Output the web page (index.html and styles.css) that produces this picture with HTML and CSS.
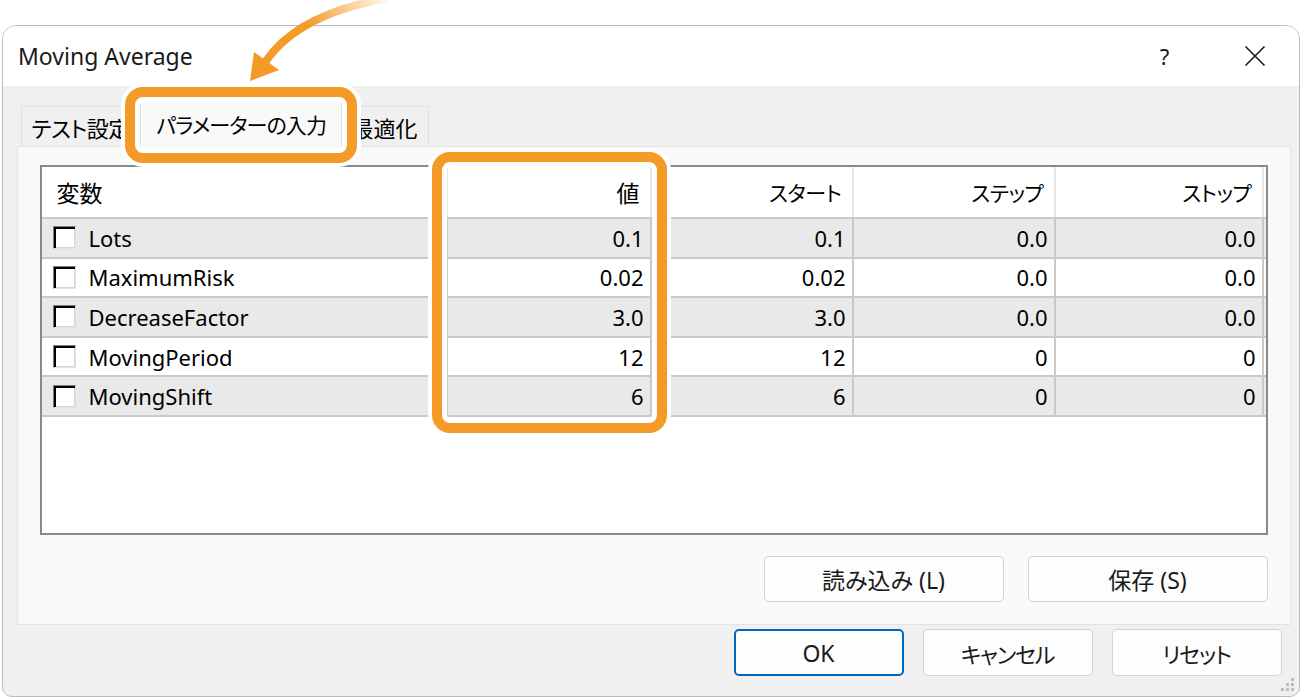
FILE: index.html
```html
<!DOCTYPE html>
<html lang="ja">
<head>
<meta charset="utf-8">
<title>Moving Average</title>
<link rel="stylesheet" href="styles.css">
</head>
<body>
<div class="window">
  <div class="titlebar">
    <div class="title">Moving Average</div>
    <div class="ctl help">?</div>
    <div class="ctl close">
      <svg width="22" height="22" viewBox="0 0 22 22"><path d="M1.5 1.5 L20.5 20.5 M20.5 1.5 L1.5 20.5" stroke="#1a1a1a" stroke-width="1.6" fill="none"/></svg>
    </div>
  </div>
  <div class="content">
    <div class="tabs">
      <div class="tab first">テスト設定</div>
      <div class="tab active">パラメーターの入力</div>
      <div class="tab last">最適化</div>
    </div>
    <div class="panel">
      <div class="table">
        <div class="row head">
          <div class="cell name kanji">変数</div>
          <div class="cell num kanji">値</div>
          <div class="cell num">スタート</div>
          <div class="cell num">ステップ</div>
          <div class="cell num">ストップ</div>
        </div>
        <div class="row odd">
          <div class="cell name"><span class="cb"></span>Lots</div>
          <div class="cell num">0.1</div>
          <div class="cell num">0.1</div>
          <div class="cell num">0.0</div>
          <div class="cell num">0.0</div>
        </div>
        <div class="row">
          <div class="cell name"><span class="cb"></span>MaximumRisk</div>
          <div class="cell num">0.02</div>
          <div class="cell num">0.02</div>
          <div class="cell num">0.0</div>
          <div class="cell num">0.0</div>
        </div>
        <div class="row odd">
          <div class="cell name"><span class="cb"></span>DecreaseFactor</div>
          <div class="cell num">3.0</div>
          <div class="cell num">3.0</div>
          <div class="cell num">0.0</div>
          <div class="cell num">0.0</div>
        </div>
        <div class="row">
          <div class="cell name"><span class="cb"></span>MovingPeriod</div>
          <div class="cell num">12</div>
          <div class="cell num">12</div>
          <div class="cell num">0</div>
          <div class="cell num">0</div>
        </div>
        <div class="row odd last-row">
          <div class="cell name"><span class="cb"></span>MovingShift</div>
          <div class="cell num">6</div>
          <div class="cell num">6</div>
          <div class="cell num">0</div>
          <div class="cell num">0</div>
        </div>
      </div>
      <div class="panel-actions">
        <button class="btn wide">読み込み (L)</button>
        <button class="btn wide">保存 (S)</button>
      </div>
    </div>
    <div class="dialog-actions">
      <button class="btn ok">OK</button>
      <button class="btn kana">キャンセル</button>
      <button class="btn kana">リセット</button>
    </div>
  </div>
  <svg class="grip" width="16" height="16" viewBox="0 0 16 16">
    <rect x="11" y="0" width="3" height="3" fill="#bdbdbd"/>
    <rect x="6" y="5" width="3" height="3" fill="#bdbdbd"/>
    <rect x="11" y="5" width="3" height="3" fill="#bdbdbd"/>
    <rect x="1" y="10" width="3" height="3" fill="#bdbdbd"/>
    <rect x="6" y="10" width="3" height="3" fill="#bdbdbd"/>
    <rect x="11" y="10" width="3" height="3" fill="#bdbdbd"/>
  </svg>
</div>

<div class="hl hl-tab"></div>
<div class="hl hl-col"></div>

<svg class="arrow" width="400" height="100" viewBox="0 0 400 100">
  <defs>
    <linearGradient id="ag" gradientUnits="userSpaceOnUse" x1="265" y1="62" x2="385" y2="0">
      <stop offset="0" stop-color="#f39b26"/>
      <stop offset="0.4" stop-color="#f39b26"/>
      <stop offset="1" stop-color="#f39b26" stop-opacity="0.08"/>
    </linearGradient>
  </defs>
  <path d="M266 61 Q 298 14 388 -2" stroke="url(#ag)" stroke-width="8" fill="none"/>
  <polygon points="250,81 254,52 279,70" fill="#f39b26"/>
</svg>
</body>
</html>
```

FILE: styles.css
```css
* { box-sizing: border-box; }

body {
  margin: 0;
  width: 1302px;
  height: 698px;
  overflow: hidden;
  background: #ffffff;
  position: relative;
  font-family: "Noto Sans", "Noto Sans CJK JP", sans-serif;
  font-feature-settings: "palt";
  color: #000;
}

.window {
  position: relative;
  margin: 25px 0 0 2px;
  width: 1298px;
  height: 672px;
  border: 1.5px solid #bcbcbc;
  border-radius: 14px 14px 10px 10px;
  background: #f0f0f0;
  overflow: hidden;
  display: flex;
  flex-direction: column;
}

.titlebar {
  height: 59.5px;
  background: #ffffff;
  display: flex;
  align-items: center;
  padding-left: 15px;
  flex-shrink: 0;
}

.title {
  flex: 1;
  font-size: 23px;
  color: #1a1a1a;
}

.ctl {
  width: 89px;
  height: 100%;
  display: flex;
  align-items: center;
  justify-content: center;
  color: #1a1a1a;
}

.help {
  font-size: 22px;
  padding-right: 2px;
}

.content {
  flex: 1;
  padding: 15.5px 8.5px 0 13.5px;
  display: flex;
  flex-direction: column;
}

.tabs {
  display: flex;
  align-items: flex-end;
  height: 46px;
  margin-bottom: -1px;
  padding-left: 4px;
  position: relative;
  z-index: 1;
}

.tab {
  height: 40px;
  margin-bottom: 1px;
  border: 1px solid #e1e1e1;
  border-bottom: none;
  background: #f0f0f0;
  padding: 0 0 0 10px;
  display: flex;
  align-items: center;
  font-size: 22px;
  white-space: nowrap;
  overflow: hidden;
}

.tab.first { width: 121px; letter-spacing: -0.5px; }

.tab.active {
  position: relative;
  z-index: 2;
  width: 202px;
  height: 46px;
  margin: 0 0 0 -2px;
  background: #f9f9f9;
  padding-left: 16px;
  padding-bottom: 2px;
  font-size: 21px;
  letter-spacing: -0.9px;
}

.tab.last {
  width: 89px;
  margin-left: -2px;
  padding-left: 11px;
}

.panel {
  height: 479px;
  border: 1px solid #e3e3e3;
  background: #f9f9f9;
  padding: 18px 22px 0 22px;
  display: flex;
  flex-direction: column;
  flex-shrink: 0;
}

.table {
  height: 370px;
  border: 2px solid #868a90;
  background: #ffffff;
}

.row {
  display: grid;
  grid-template-columns: 404px 204px 202px 202px 210px;
  height: 39.6px;
  border-top: 2px solid #c9c9c9;
  font-size: 22px;
}

.row.odd { background: #e9e9e9; }

.row.last-row {
  height: 41.6px;
  border-bottom: 2px solid #c9c9c9;
}

.row.head {
  height: 50px;
  border-top: none;
  background: #ffffff;
}

.cell {
  display: flex;
  align-items: center;
  white-space: nowrap;
}

.cell + .cell { border-left: 2px solid #c9c9c9; }
.cell:last-child { border-right: 2px solid #c9c9c9; }

.head .cell + .cell { border-left-color: #e6e6e6; }
.head .cell:last-child { border-right-color: #e6e6e6; }

.head .cell.name { padding-left: 15px; }
.head .cell.num { padding-right: 10px; font-size: 21px; letter-spacing: -0.4px; }
.head .cell.kanji { font-size: 23px; letter-spacing: 0; }

.cell.name { padding-left: 11px; }
.cell.num { justify-content: flex-end; padding-right: 6px; }

.cb {
  width: 23px;
  height: 23px;
  margin-right: 13px;
  flex-shrink: 0;
  background: #ffffff;
  border: 1px solid;
  border-color: #7d7d7d #e2e2e2 #e2e2e2 #7d7d7d;
  box-shadow: inset 2px 2px 0 #000, inset -1px -1px 0 #d6d6d6;
}

.panel-actions {
  display: flex;
  justify-content: flex-end;
  gap: 24px;
  margin-top: 21px;
}

.btn {
  font-family: "Noto Sans", "Noto Sans CJK JP", sans-serif;
  font-feature-settings: "palt";
  font-size: 23px;
  color: #1a1a1a;
  width: 170px;
  height: 47px;
  border: 1.5px solid #d3d3d3;
  border-radius: 5px;
  background: #fdfdfd;
  padding: 0;
  display: flex;
  align-items: center;
  justify-content: center;
}

.btn.kana {
  font-size: 22px;
  letter-spacing: -1.2px;
}

.btn.wide {
  width: 240px;
  height: 46px;
}

.btn.ok {
  border: 2px solid #0067c0;
}

.dialog-actions {
  display: flex;
  justify-content: flex-end;
  gap: 19px;
  margin-top: 4px;
  padding-right: 9px;
}

.grip {
  position: absolute;
  right: 3px;
  bottom: 2px;
}

.hl {
  position: absolute;
  border: 10px solid #f39b26;
  border-radius: 18px;
  box-shadow: 0 0 0 4px #ffffff, inset 0 0 0 5px #ffffff;
  z-index: 4;
}

.hl-tab {
  left: 125px;
  top: 87px;
  width: 232px;
  height: 76px;
}

.hl-col {
  left: 432px;
  top: 152px;
  width: 235px;
  height: 281px;
}

.arrow {
  position: absolute;
  left: 0;
  top: 0;
  z-index: 5;
}
```
